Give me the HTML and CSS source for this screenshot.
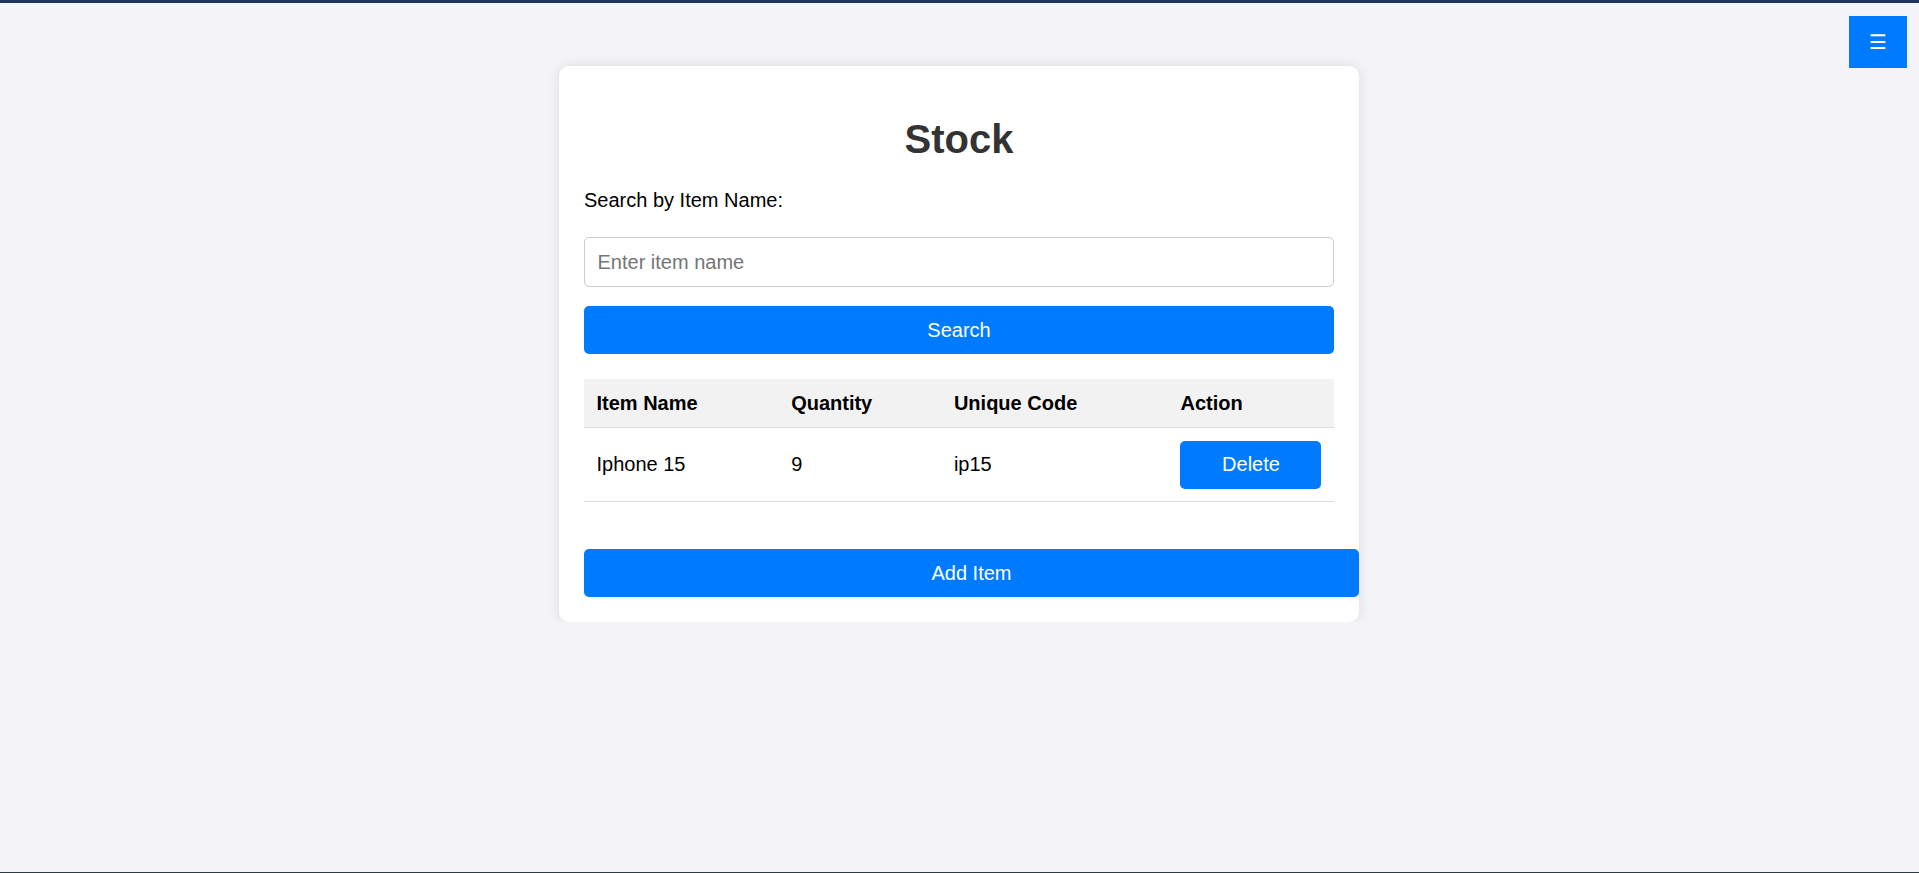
FILE: index.html
```html
<!DOCTYPE html>
<html lang="en">
<head>
<meta charset="utf-8">
<title>Stock</title>
<link rel="stylesheet" href="styles.css">
</head>
<body>
<button class="menu-btn" type="button">☰</button>
<div class="card">
  <h1 class="title">Stock</h1>
  <label class="label" for="search">Search by Item Name:</label>
  <input id="search" class="input" type="text" placeholder="Enter item name">
  <button class="btn btn-full" type="button">Search</button>
  <table class="table">
    <thead>
      <tr>
        <th class="c-name">Item Name</th>
        <th class="c-qty">Quantity</th>
        <th class="c-code">Unique Code</th>
        <th class="c-act">Action</th>
      </tr>
    </thead>
    <tbody>
      <tr>
        <td>Iphone 15</td>
        <td>9</td>
        <td>ip15</td>
        <td><button class="btn btn-del" type="button">Delete</button></td>
      </tr>
    </tbody>
  </table>
  <button class="btn btn-add" type="button">Add Item</button>
</div>
</body>
</html>
```
FILE: styles.css
```css
html {
  border-top: 3px solid #1c365e;
  border-bottom: 1px solid #2c3a42;
  min-height: 100vh;
  box-sizing: border-box;
  background: #f4f4f8;
}
body {
  margin: 0;
  font-family: "Liberation Sans", Arial, sans-serif;
  font-size: 20px;
  color: #000;
  background: #f4f4f8;
}
.menu-btn {
  position: fixed;
  top: 16px;
  right: 12px;
  width: 58px;
  height: 52px;
  border: 0;
  padding: 0;
  background: #007bff;
  color: #fff;
  font-family: "DejaVu Sans", sans-serif;
  font-size: 20px;
  line-height: 1;
  display: flex;
  align-items: center;
  justify-content: center;
}
.card {
  width: 750px;
  margin: 63px auto 0 calc(50% - 400.5px);
  padding: 25px;
  background: #fff;
  border-radius: 10px;
  box-shadow: 0 0 12px rgba(0, 0, 0, 0.1);
}
.title {
  margin: 26px 0 27px;
  text-align: center;
  font-size: 40px;
  font-weight: bold;
  color: #333;
}
.label {
  display: block;
  margin-bottom: 25px;
}
.input {
  display: block;
  width: 100%;
  box-sizing: border-box;
  height: 50px;
  padding: 12.5px;
  border: 1px solid #ccc;
  border-radius: 5px;
  font-family: inherit;
  font-size: 20px;
  margin: 0;
}
.input::placeholder {
  color: #757575;
}
.btn {
  background: #007bff;
  color: #fff;
  border: 0;
  border-radius: 5px;
  font-family: inherit;
  font-size: 20px;
  padding: 12.5px;
  line-height: 23px;
  margin: 0;
}
.btn-full {
  display: block;
  width: 100%;
  margin-top: 19px;
}
.table {
  width: 100%;
  border-collapse: collapse;
  margin-top: 25px;
}
.table th,
.table td {
  padding: 12.5px;
  text-align: left;
  border-bottom: 1px solid #ddd;
  line-height: 23px;
}
.table th {
  background: #f2f2f2;
  font-weight: bold;
}
.c-name { width: 170px; }
.c-qty { width: 138px; }
.c-code { width: 202px; }
.c-act { width: 140px; }
.btn-del {
  width: 141px;
  display: block;
}
.btn-add {
  display: block;
  width: 100%;
  box-sizing: content-box;
  margin-top: 47px;
}
```
